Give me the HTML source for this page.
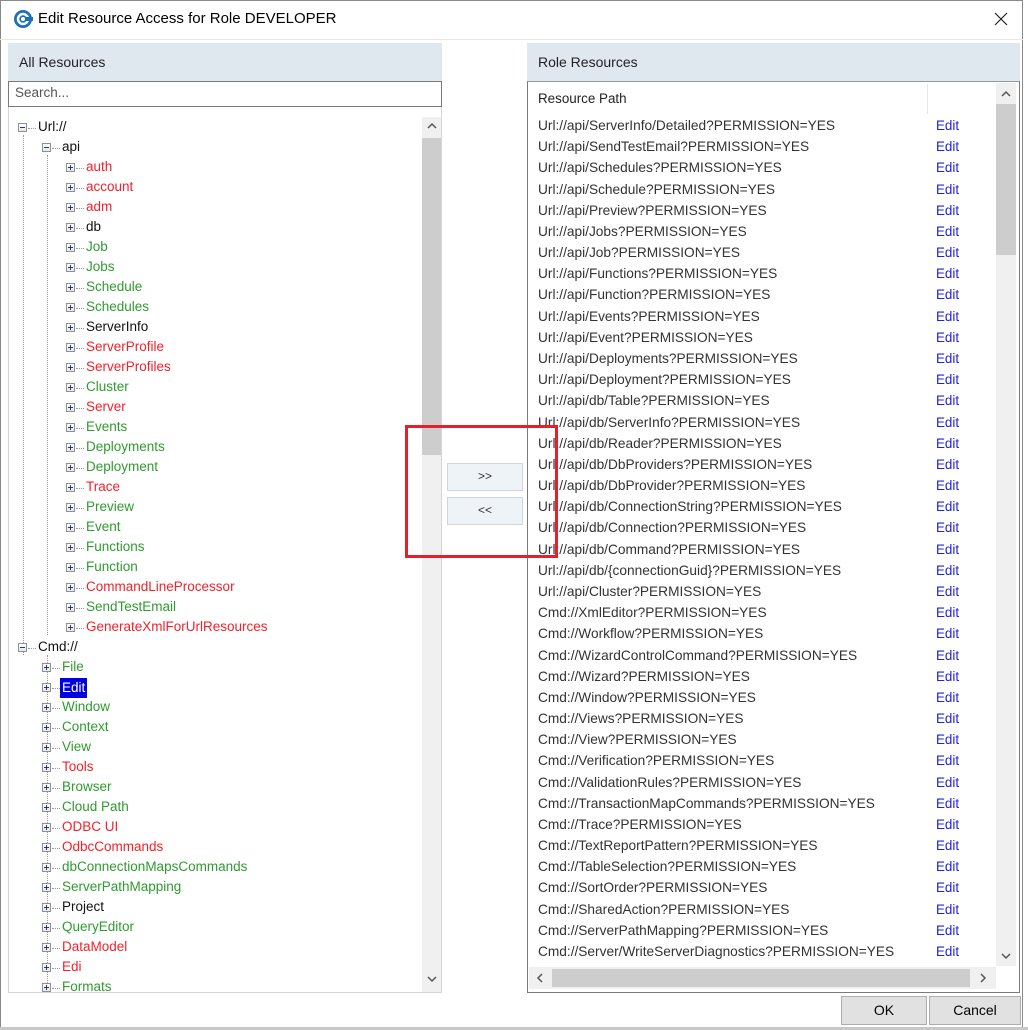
<!DOCTYPE html>
<html><head><meta charset="utf-8"><style>
*{margin:0;padding:0;box-sizing:border-box}
body{width:1028px;height:1030px;background:#fff;position:relative;overflow:hidden;font-family:"Liberation Sans",sans-serif;font-size:13px;color:#000}
.a{position:absolute}
.win{left:0;top:0;width:1023px;height:1030px;border:1px solid #8a8a8a;background:#fff}
.title{left:38px;top:10px;font-size:15px;color:#000}
.hdr{background:#dfe7ef;height:38px;font-size:14px;color:#222;padding:11px 0 0 11px}
.tree{left:8px;top:107px;width:434px;height:886px;border:1px solid #d5d5d5;border-top:none;overflow:hidden;background:#fff}
.r{position:absolute;height:18px;line-height:18px;white-space:nowrap;font-size:13.5px}
.box{position:absolute;width:9px;height:9px;border:1px solid #919191;background:linear-gradient(#fff,#e6e6e6)}
.box:before{content:"";position:absolute;left:1px;top:3px;width:5px;height:1px;background:#1c3b77}
.box.p:after{content:"";position:absolute;left:3px;top:1px;width:1px;height:5px;background:#1c3b77}
.R{color:#f0222c}.G{color:#2f9b2f}.K{color:#111}
.vs{background:#f0f0f0}
.btn{background:#eef3f7;border:1px solid #d0d6dc;text-align:center;font-size:12px;color:#333;line-height:25px}
.rr{position:absolute;left:538px;white-space:nowrap;font-size:13.7px;color:#333;height:18px;line-height:18px}
.ed{position:absolute;left:936px;color:#2222dd;font-size:13.4px;height:18px;line-height:18px}
</style></head><body>
<div class="a win"></div>
<svg class="a" style="left:13px;top:9px" width="20" height="20" viewBox="0 0 20 20"><circle cx="10" cy="10" r="9" fill="#1d6fb8"/><circle cx="10" cy="10" r="5" fill="none" stroke="#fff" stroke-width="2.5"/><rect x="12" y="8" width="8" height="4" fill="#1d6fb8"/><circle cx="10" cy="10" r="2" fill="#fff"/></svg>
<div class="a title">Edit Resource Access for Role DEVELOPER</div>
<svg class="a" style="left:994px;top:12px" width="14" height="14"><path d="M1 1L13 13M13 1L1 13" stroke="#222" stroke-width="1.2"/></svg>
<div class="a" style="left:0;top:39px;width:1023px;height:1px;background:#e8e8e8"></div>

<div class="a hdr" style="left:8px;top:43px;width:434px">All Resources</div>
<div class="a" style="left:8px;top:81px;width:434px;height:26px;border:1px solid #7a7a7a;background:#fff;font-size:13.5px;color:#555;padding:3px 0 0 6px">Search...</div>
<div class="a tree">
<div class="a vs" style="left:413px;top:10px;width:20px;height:876px"></div>
<div class="a" style="left:413px;top:31px;width:20px;height:317px;background:#cdcdcd"></div>
<svg class="a" style="left:418px;top:15px" width="10" height="8"><path d="M1 6L5 2L9 6" stroke="#555" stroke-width="1.5" fill="none"/></svg>
<svg class="a" style="left:418px;top:868px" width="10" height="8"><path d="M1 2L5 6L9 2" stroke="#555" stroke-width="1.5" fill="none"/></svg>
<div class="a" style="left:14px;top:28px;width:0;height:520px;border-left:1px dotted #999"></div>
<div class="a" style="left:38px;top:48px;width:0;height:480px;border-left:1px dotted #999"></div>
<div class="a" style="left:38px;top:548px;width:0;height:340px;border-left:1px dotted #999"></div>
</div>
<div id="tree"></div>

<div class="a btn" style="left:447px;top:463px;width:76px;height:28px">&gt;&gt;</div>
<div class="a btn" style="left:447px;top:497px;width:76px;height:28px">&lt;&lt;</div>

<div class="a hdr" style="left:527px;top:43px;width:493px">Role Resources</div>
<div class="a" style="left:527px;top:81px;width:493px;height:912px;border:1px solid #7a7a7a;border-top:1px solid #999;background:#fff"></div>
<div class="a" style="left:538px;top:91px;font-size:13.4px;color:#222">Resource Path</div>
<div class="a" style="left:927px;top:84px;width:1px;height:30px;background:#e5e5e5"></div>
<div class="a vs" style="left:996px;top:83px;width:20px;height:883px"></div>
<div class="a" style="left:996px;top:104px;width:20px;height:151px;background:#cdcdcd"></div>
<svg class="a" style="left:1001px;top:90px" width="10" height="8"><path d="M1 6L5 2L9 6" stroke="#555" stroke-width="1.5" fill="none"/></svg>
<svg class="a" style="left:1001px;top:952px" width="10" height="8"><path d="M1 2L5 6L9 2" stroke="#555" stroke-width="1.5" fill="none"/></svg>
<div class="a vs" style="left:529px;top:967px;width:467px;height:22px"></div>
<div class="a" style="left:552px;top:969px;width:418px;height:18px;background:#cdcdcd"></div>
<svg class="a" style="left:536px;top:973px" width="8" height="10"><path d="M6 1L2 5L6 9" stroke="#555" stroke-width="1.5" fill="none"/></svg>
<svg class="a" style="left:979px;top:973px" width="8" height="10"><path d="M2 1L6 5L2 9" stroke="#555" stroke-width="1.5" fill="none"/></svg>
<div id="rows"></div>

<div class="a" style="left:405px;top:425px;width:153px;height:133px;border:3px solid #e5202b"></div>

<div class="a" style="left:841px;top:996px;width:86px;height:29px;background:#e1e1e1;border:1px solid #adadad;text-align:center;line-height:27px;font-size:14px">OK</div>
<div class="a" style="left:929px;top:996px;width:92px;height:29px;background:#e1e1e1;border:1px solid #adadad;text-align:center;line-height:27px;font-size:14px">Cancel</div>
<div class="a" style="left:0;top:1027px;width:1028px;height:3px;background:#c8c8c8"></div>

<script>
var t=[["Url://","K",0,0],["api","K",1,0],
["auth","R"],["account","R"],["adm","R"],["db","K"],["Job","G"],["Jobs","G"],["Schedule","G"],["Schedules","G"],["ServerInfo","K"],["ServerProfile","R"],["ServerProfiles","R"],["Cluster","G"],["Server","R"],["Events","G"],["Deployments","G"],["Deployment","G"],["Trace","R"],["Preview","G"],["Event","G"],["Functions","G"],["Function","G"],["CommandLineProcessor","R"],["SendTestEmail","G"],["GenerateXmlForUrlResources","R"],
["Cmd://","K",0,0],["File","G",1],["Edit","S",1],["Window","G",1],["Context","G",1],["View","G",1],["Tools","R",1],["Browser","G",1],["Cloud Path","G",1],["ODBC UI","R",1],["OdbcCommands","R",1],["dbConnectionMapsCommands","G",1],["ServerPathMapping","G",1],["Project","K",1],["QueryEditor","G",1],["DataModel","R",1],["Edi","R",1],["Formats","G",1]];
var h="";
t.forEach(function(e,i){var lv=e[2]===undefined?2:e[2];var y=128+i*20;if(y>997)return;
var bx=18+lv*24,tx=bx+20;var minus=e[3]===0;
h+='<div class="box'+(minus?'':' p')+'" style="left:'+bx+'px;top:'+(y-5)+'px"></div>';
h+='<div class="a" style="left:'+(bx+10)+'px;top:'+y+'px;width:8px;border-top:1px dotted #999"></div>';
if(e[1]=="S")h+='<div class="r" style="left:'+(tx-2)+'px;top:'+(y-10)+'px;background:#0000e0;color:#fff;padding:0 2px;height:20px;line-height:20px">'+e[0]+'</div>';
else h+='<div class="r '+e[1]+'" style="left:'+tx+'px;top:'+(y-10)+'px">'+e[0]+'</div>';});
var tr=document.createElement('div');tr.style.cssText='position:absolute;left:0;top:0;width:421px;height:993px;overflow:hidden';tr.innerHTML=h;document.getElementById('tree').appendChild(tr);
var r=["Url://api/ServerInfo/Detailed","Url://api/SendTestEmail","Url://api/Schedules","Url://api/Schedule","Url://api/Preview","Url://api/Jobs","Url://api/Job","Url://api/Functions","Url://api/Function","Url://api/Events","Url://api/Event","Url://api/Deployments","Url://api/Deployment","Url://api/db/Table","Url://api/db/ServerInfo","Url://api/db/Reader","Url://api/db/DbProviders","Url://api/db/DbProvider","Url://api/db/ConnectionString","Url://api/db/Connection","Url://api/db/Command","Url://api/db/{connectionGuid}","Url://api/Cluster","Cmd://XmlEditor","Cmd://Workflow","Cmd://WizardControlCommand","Cmd://Wizard","Cmd://Window","Cmd://Views","Cmd://View","Cmd://Verification","Cmd://ValidationRules","Cmd://TransactionMapCommands","Cmd://Trace","Cmd://TextReportPattern","Cmd://TableSelection","Cmd://SortOrder","Cmd://SharedAction","Cmd://ServerPathMapping","Cmd://Server/WriteServerDiagnostics"];
var g="";r.forEach(function(s,i){var y=Math.round(126+i*21.18-9);g+='<div class="rr" style="top:'+y+'px">'+s+'?PERMISSION=YES</div><div class="ed" style="top:'+y+'px">Edit</div>';});
document.getElementById('rows').innerHTML=g;
</script>
</body></html>
